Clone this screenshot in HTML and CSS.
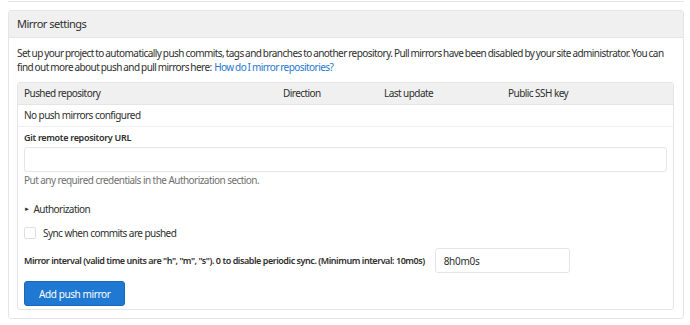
FILE: index.html
```html
<!DOCTYPE html>
<html lang="en">
<head>
  <meta charset="UTF-8">
  <title>Mirror settings</title>
  <link rel="stylesheet" href="styles.css">
</head>
<body>
  <div class="prev-panel"></div>

  <section class="panel">
    <div class="panel-header">Mirror settings</div>
    <div class="panel-body">
      <p class="intro">
        Set up your project to automatically push commits, tags and branches to another repository. Pull mirrors have been disabled by your site administrator. You can find out more about push and pull mirrors here: <a href="#">How do I mirror repositories?</a>
      </p>

      <div class="mirror-box">
        <div class="mirror-table">
          <div class="row head">
            <span class="col-repo">Pushed repository</span>
            <span class="col-dir">Direction</span>
            <span class="col-update">Last update</span>
            <span class="col-key">Public SSH key</span>
          </div>
          <div class="row empty">No push mirrors configured</div>
        </div>

        <form class="mirror-form">
          <label class="label" for="url">Git remote repository URL</label>
          <input class="text-input url-input" id="url" type="text">
          <p class="help">Put any required credentials in the Authorization section.</p>

          <div class="auth"><span class="caret">&#9658;</span> Authorization</div>

          <label class="check">
            <span class="box"></span>
            Sync when commits are pushed
          </label>

          <div class="interval">
            <span class="label">Mirror interval (valid time units are "h", "m", "s"). 0 to disable periodic sync. (Minimum interval: 10m0s)</span>
            <input class="text-input interval-input" type="text" value="8h0m0s">
          </div>

          <button type="button" class="btn-primary">Add push mirror</button>
        </form>
      </div>
    </div>
  </section>
</body>
</html>
```

FILE: styles.css
```css
* {
  margin: 0;
  padding: 0;
  box-sizing: border-box;
}

body {
  font-family: 'Noto Sans', 'Open Sans', sans-serif;
  font-size: 10px;
  letter-spacing: -0.55px;
  color: #2e2e2e;
  background-color: #fff;
  padding: 0 6px 0 8px;
}

.prev-panel {
  height: 2px;
  border-bottom: 1px solid #e5e5e5;
  margin-bottom: 8px;
}

.panel {
  border: 1px solid #e5e5e5;
  border-radius: 3px;
}

.panel-header {
  background-color: #f0f0f0;
  border-bottom: 1px solid #e5e5e5;
  height: 27px;
  line-height: 26px;
  padding: 0 8px;
  font-size: 11px;
  letter-spacing: -0.5px;
}

.panel-body {
  padding: 8px 9px 8px 8px;
}

.intro {
  line-height: 14px;
  word-spacing: -0.6px;
  margin-right: -4px;
  margin-bottom: 8px;
}

.intro a {
  color: #1f78d1;
  text-decoration: none;
  margin-left: 1px;
}

.mirror-box {
  border: 1px solid #e5e5e5;
  border-radius: 3px;
}

.row {
  display: flex;
  height: 22px;
  line-height: 21px;
  padding: 0 6px;
  border-bottom: 1px solid #f0f0f0;
}

.row.head {
  background-color: #f0f0f0;
  border-bottom: 1px solid #e5e5e5;
}

.col-repo { width: 259px; }
.col-dir { width: 101px; }
.col-update { width: 124px; }

.mirror-form {
  padding: 4px 6px 3px 6px;
}

.label {
  font-weight: 600;
  font-size: 9px;
  letter-spacing: -0.3px;
}

.interval .label {
  letter-spacing: -0.45px;
}

.mirror-form > .label {
  display: block;
  line-height: 14px;
}

.text-input {
  border: 1px solid #e5e5e5;
  border-radius: 3px;
  font-family: inherit;
  font-size: 10px;
  letter-spacing: -0.3px;
  color: #2e2e2e;
  height: 25px;
  padding: 0 8px;
  outline: none;
}

.url-input {
  display: block;
  width: 100%;
  margin-top: 2px;
}

.help {
  color: #707070;
  line-height: 14px;
  margin-top: 1px;
}

.auth {
  margin-top: 15px;
  line-height: 14px;
}

.caret {
  font-size: 6px;
  vertical-align: 2px;
  margin-right: 2px;
}

.check {
  display: flex;
  align-items: center;
  gap: 7px;
  margin-top: 10px;
  height: 14px;
}

.box {
  width: 12px;
  height: 12px;
  border: 1px solid #dfdfdf;
  border-radius: 2px;
  background-color: #fff;
}

.interval {
  display: flex;
  align-items: center;
  gap: 10px;
  margin-top: 8px;
}

.interval-input {
  width: 135px;
}

.btn-primary {
  display: block;
  margin-top: 8px;
  height: 25px;
  padding: 0 14px;
  font-family: inherit;
  font-size: 10px;
  letter-spacing: -0.4px;
  color: #fff;
  background-color: #1f78d1;
  border: 1px solid #1b69b6;
  border-radius: 3px;
}
```
